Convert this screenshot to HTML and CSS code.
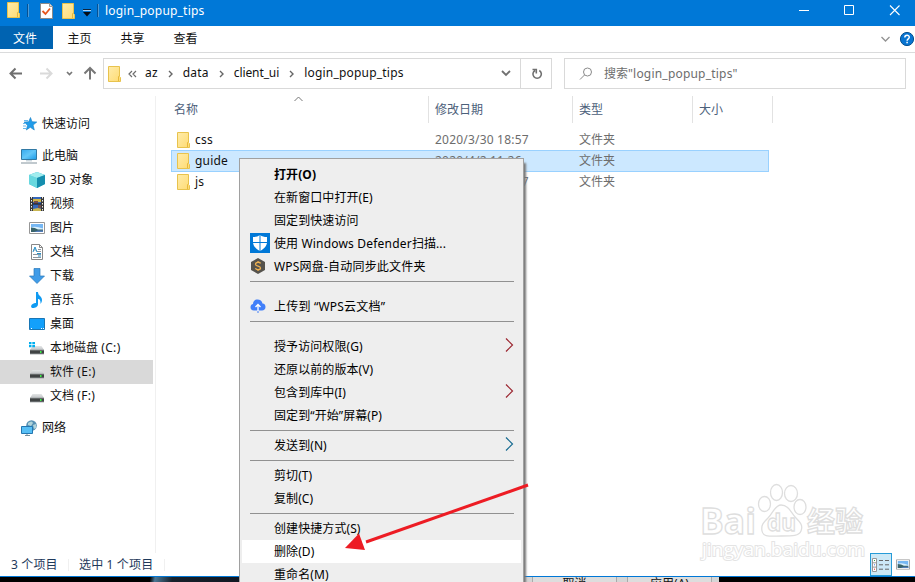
FILE: index.html
```html
<!DOCTYPE html>
<html lang="zh-CN">
<head>
<meta charset="utf-8">
<title>login_popup_tips</title>
<link rel="stylesheet" href="styles.css">
</head>
<body>
<svg class="defs" width="0" height="0">
  <defs>
    <linearGradient id="fold" x1="0" y1="0" x2="1" y2="1"><stop offset="0" stop-color="#ffecab"/><stop offset="1" stop-color="#fedb72"/></linearGradient>
    <linearGradient id="scr" x1="0" y1="0" x2="1" y2="1"><stop offset="0" stop-color="#35a9ee"/><stop offset=".5" stop-color="#64c7f8"/><stop offset="1" stop-color="#199ae8"/></linearGradient>
    <linearGradient id="drv" x1="0" y1="0" x2="0" y2="1"><stop offset="0" stop-color="#e4e6e7"/><stop offset="1" stop-color="#bfc2c4"/></linearGradient>
  </defs>
  <symbol id="folder" viewBox="0 0 13 16"><path d="M.5.5h11v10l1 1v4H.5z" fill="url(#fold)" stroke="#e8c34d"/><path d="M10.500 15v-4.500l1-1" fill="none" stroke="#e8b93a"/></symbol>
  <symbol id="drive" viewBox="0 0 16 16"><path d="M3.500 6h9L15 10H1z" fill="url(#drv)"/><path d="M1 10h14v4H1z" fill="#404344"/><path d="M1 10h14M1 14h14" stroke="#9da1a3" stroke-width=".8"/><path d="M11 11h1.500v2H11z" fill="#39ef45"/></symbol>
  <symbol id="photo" viewBox="0 0 16 12"><path d="M.5.5h15v11H.5z" fill="#fff" stroke="#969696"/><path d="M2 2h12v8H2z" fill="#76b7f3"/><path d="M2 5.500q4-2 12 1V8H2z" fill="#d9f0fd"/><path d="M2 5.500q4 0 7 2h5V10H2z" fill="#38636a"/><path d="M5 10l4-1.500h5V10z" fill="#547ebc"/></symbol>
</svg>
<div class="window">
  <header class="titlebar">
    <svg class="folder" width="13" height="16"><use href="#folder"/></svg>
    <i class="bar"></i>
    <svg class="check" width="13" height="16" viewBox="0 0 13 16"><path d="M.5.500h9l3 3v12H.5z" fill="#fff" stroke="#8a8a8a"/><path d="M9.500.5v3h3" fill="#ddd" stroke="#999"/><path d="M2.500 8l3 3L10 5.500" fill="none" stroke="#e8561c" stroke-width="1.800"/></svg>
    <svg class="folder second" width="13" height="16"><use href="#folder"/></svg>
    <svg class="more" width="8" height="8" viewBox="0 0 8 8"><path d="M0 .500h8" stroke="#10253c"/><path d="M0 1.500h8" stroke="#d4eaff" stroke-width=".8"/><path d="M0 3h8L4 7.500z" fill="#050c15"/></svg>
    <i class="bar last"></i>
    <span class="latin caption">login_popup_tips</span>
    <svg class="controls" width="112" height="22" viewBox="0 0 112 22" fill="none" stroke="#fff"><path d="M6 10.500h10M51.500 5.500h9v9h-9z"/><path d="M97 5.500l9.500 9.500M106.500 5.500L97 15" stroke-width="1.100"/></svg>
  </header>
  <nav class="tabs">
    <span class="tab active">文件</span><span class="tab">主页</span><span class="tab">共享</span><span class="tab">查看</span>
    <svg class="help" width="36" height="16" viewBox="0 0 36 16"><path d="M2.500 6l4 4 4-4" fill="none" stroke="#929292" stroke-width="1.300"/><circle cx="28" cy="8" r="6.600" fill="#0874d1" stroke="#075190"/><path d="M25.800 6.500c0-3 4.500-3 4.500-.2 0 1.600-2.200 1.500-2.200 3.400M28.100 10.800v1.500" fill="none" stroke="#fff" stroke-width="1.500"/></svg>
  </nav>
  <div class="navrow">
    <svg class="arrows" width="103" height="31" viewBox="0 0 103 31" fill="none" stroke-width="2"><path d="M22 15.500H11M15.500 10.500l-5 5 5 5" stroke="#6f6f6f"/><path d="M40 15.500h11M46.500 10.500l5 5-5 5" stroke="#dadada"/><path d="M67 14l2.500 2.500L72 14" stroke="#777" stroke-width="1.700"/><path d="M90 21.500V11M84.500 15.500l5.500-5.500 5.500 5.500" stroke="#777"/></svg>
    <div class="address">
      <svg class="folder" width="13" height="16"><use href="#folder"/></svg>
      <svg class="dbl" width="9" height="8" viewBox="0 0 9 8" fill="none" stroke="#6c6c6c" stroke-width="1.200"><path d="M4 1L1 4l3 3M8 1L5 4l3 3"/></svg>
      <span class="latin">az</span><svg class="chev" width="5" height="8"><path d="M1 1l3 3-3 3"/></svg>
      <span class="latin">data</span><svg class="chev" width="5" height="8"><path d="M1 1l3 3-3 3"/></svg>
      <span class="latin tight">client_ui</span><svg class="chev" width="5" height="8"><path d="M1 1l3 3-3 3"/></svg>
      <span class="latin">login_popup_tips</span>
      <svg class="drop" width="10" height="7" viewBox="0 0 10 7"><path d="M1 1l4 4 4-4" fill="none" stroke="#707070" stroke-width="1.800"/></svg>
      <svg class="refresh" width="31" height="29" viewBox="0 0 31 29" fill="none"><path d="M.5 0v29" stroke="#d9d9d9"/><path d="M19.300 11.500a4.200 4.200 0 1 1-4.300 0M12.500 10.500h3.800v4" stroke="#707070" stroke-width="1.600"/></svg>
    </div>
    <div class="search">
      <svg width="14" height="14" viewBox="0 0 14 14" fill="none" stroke="#8a8a8a"><circle cx="8.500" cy="5" r="4"/><path d="M5.500 8L1 12.500"/></svg>
      <span>搜索<span class="latin">"login_popup_tips"</span></span>
    </div>
  </div>
  <div class="body">
    <aside class="side">
      <div class="node top"><svg width="16" height="16" viewBox="0 0 16 16"><path d="M9.500 1.500l1.500 4.200 4.800.3-3.700 3.100 1.200 4.900-4-2.700-4 2.700 1.200-4.700L3 6l4.700-.3z" fill="#219ce9" stroke="#187fc5" stroke-width=".6"/><path d="M3 4.500h4M2 7.500h3M2 10h3M2 12.500h3" stroke="#69b9ee"/></svg>快速访问</div>
      <div class="node top gap"><svg width="16" height="16" viewBox="0 0 16 16"><path d="M.5 1.500h15v10H.5z" fill="url(#scr)" stroke="#3279a4"/><path d="M5 12h6v1.500H5z" fill="#ccd8df"/><path d="M0 15h16" stroke="#82939d"/></svg>此电脑</div>
      <div class="node"><svg width="16" height="16" viewBox="0 0 16 16"><path d="M0 3l8-3 8 3v9l-8 4-8-4z" fill="#33b5d2"/><path d="M0 3l8 3v10l-8-4z" fill="#68d8df"/><path d="M0 3l8-3 8 3-8 3z" fill="#a1edee"/><path d="M8 6l8-3v9l-8 4z" fill="#158eae"/></svg><span class="latin">3D</span>&nbsp;对象</div>
      <div class="node"><svg width="16" height="16" viewBox="0 0 16 16"><path d="M1 1h14v14H1z" fill="#383838"/><path d="M4 1h8v14H4z" fill="#3467bb"/><path d="M4 3h8v3H4z" fill="#d0b64a"/><path d="M5 5h4v3H5zM9 9h3v3H9z" fill="#724d4e"/><path d="M4 8h8" stroke="#141414"/><path d="M2.500 1v14M13.500 1v14" stroke="#eee" stroke-dasharray="1.500 1.500"/><path d="M4 13l5-1 3 1v2H4z" fill="#c9b651"/></svg>视频</div>
      <div class="node"><svg width="16" height="12"><use href="#photo"/></svg>图片</div>
      <div class="node"><svg width="16" height="16" viewBox="0 0 16 16"><path d="M2.500.5h8l3 3v12h-11z" fill="#fff" stroke="#888"/><path d="M10.500.5v3h3" fill="none" stroke="#888"/><path d="M4 6h3M9 5.500h3M8 7.500h4M4 10.500h8M4 13.500h8" stroke="#8b969e"/><path d="M4 8l2-5 2 5M8 9.500h4M9 12h3" fill="none" stroke="#2492cd"/></svg>文档</div>
      <div class="node"><svg width="16" height="16" viewBox="0 0 16 16"><path d="M5 .5h6V8h4.500L8 15.500.5 8H5z" fill="#409ce8" stroke="#2878ba" stroke-width=".7"/></svg>下载</div>
      <div class="node"><svg width="16" height="16" viewBox="0 0 16 16"><path d="M7 0h2c0 4 4 4 4 8 0 2-1 3-1.500 4 .3-4-1-5-2.500-5v5c0 3-3 4-5 4s-2.500-2-1-3.500S6 11 7 11z" fill="#109bf2"/></svg>音乐</div>
      <div class="node"><svg width="16" height="12" viewBox="0 0 16 12"><path d="M.5.5h15v11H.5z" fill="#13a0fb" stroke="#1976b5"/><path d="M2 10.500h1M12 10.500h1M14 10.500h1" stroke="#fff"/></svg>桌面</div>
      <div class="node"><svg width="16" height="16" viewBox="0 0 16 16"><use href="#drive" width="16" height="16"/><path d="M0 2h2.500v2.200H0zM3.300 2H6v2.200H3.300zM0 5h2.500v2.200H0zM3.300 5H6v2.200H3.300z" fill="#00aeef"/></svg>本地磁盘&nbsp;<span class="vol">(C:)</span></div>
      <div class="node selected"><svg width="16" height="16"><use href="#drive"/></svg>软件&nbsp;<span class="vol">(E:)</span></div>
      <div class="node"><svg width="16" height="16"><use href="#drive"/></svg>文档&nbsp;<span class="vol">(F:)</span></div>
      <div class="node top gap"><svg width="16" height="16" viewBox="0 0 16 16"><circle cx="10.500" cy="5.500" r="5.300" fill="#5791b4"/><path d="M7 3q4-3 5 0l-2 3-3-1zM12 5l3-1v4l-2 1z" fill="#b1d4da"/><path d="M.5 6.500h11v7H.5z" fill="#57bff5" stroke="#2477b0"/><path d="M4 15.500h5M6 14v1" stroke="#75909e"/></svg>网络</div>
    </aside>
    <main class="files">
      <div class="row head"><span>名称<svg class="sort" width="9" height="6" viewBox="0 0 9 6"><path d="M.5 5l4-4 4 4" fill="none" stroke="#777"/></svg></span><span>修改日期</span><span>类型</span><span>大小</span></div>
      <div class="row"><span><svg width="13" height="16"><use href="#folder"/></svg><b class="latin">css</b></span><span class="latin">2020/3/30 18:57</span><span>文件夹</span><span></span></div>
      <div class="row selected"><span><svg width="13" height="16"><use href="#folder"/></svg><b class="latin">guide</b></span><span class="latin">2020/4/2 11:26</span><span>文件夹</span><span></span></div>
      <div class="row"><span><svg width="13" height="16"><use href="#folder"/></svg><b class="latin">js</b></span><span class="latin">2020/3/30 18:57</span><span>文件夹</span><span></span></div>
    </main>
  </div>
  <footer class="status">
    <span class="count">3 个项目</span><span class="chosen">选中 1 个项目</span>
    <div class="views">
      <span class="view on"><svg width="18" height="14" viewBox="0 0 18 14" fill="#fff" stroke="#969696"><path d="M.5.5h4v13h-4zM.5 4.800h4M.5 9.100h4"/><path d="M7 2.500h4M13 2.500h4M7 6.800h4M13 6.800h4M7 11.200h4M13 11.200h4" stroke="#666"/><path d="M2 2.500h1" stroke="#38a14a"/><path d="M2 6.800h1" stroke="#3779e3"/><path d="M2 11.200h1" stroke="#e12323"/></svg></span>
      <svg class="thumb" width="14" height="11" viewBox="0 0 16 12"><use href="#photo" width="16" height="12"/></svg>
    </div>
  </footer>
</div>
<div class="desktop"><div class="space"></div><div class="dialog"><span>取消</span><span>应用(A)</span></div></div>

<svg class="watermark" width="170" height="84" viewBox="0 0 170 84">
  <g class="outline">
    <ellipse cx="67.500" cy="24" rx="6" ry="7.500"/><ellipse cx="79.500" cy="12.500" rx="6" ry="8"/><ellipse cx="94" cy="13.500" rx="6.500" ry="8"/><ellipse cx="103" cy="27" rx="6" ry="7.500"/>
    <path d="M84 25c8 0 10 8 15 13s7 8 5 13-8 5-20 5-18 1-19-5 1-8 6-13 7-13 13-13z"/>
    <text class="bai" x="3" y="54" textLength="56" lengthAdjust="spacingAndGlyphs">Bai</text>
    <text class="du" x="70" y="51" textLength="29" lengthAdjust="spacingAndGlyphs">du</text>
    <text class="exp" x="110" y="52" textLength="56">经验</text>
    <text class="url" x="5" y="76" textLength="163" lengthAdjust="spacingAndGlyphs">jingyan.baidu.com</text>
  </g>
</svg>

<div class="menu">
  <div class="item bold">打开(O)</div>
  <div class="item">在新窗口中打开(E)</div>
  <div class="item">固定到快速访问</div>
  <div class="item"><svg class="ico" width="20" height="20" viewBox="0 0 20 20"><path d="M0 0h20v20H0z" fill="#0078d7"/><path d="M10 2c2 1.500 4 2 7 2v5c0 4-3 7-7 9-4-2-7-5-7-9V4c3 0 5-.5 7-2z" fill="#fff"/><path d="M10 1v18M2 9.500h16" stroke="#0078d7"/></svg>使用&nbsp;<span class="latin">Windows Defender</span>扫描...</div>
  <div class="item wide"><svg class="ico" width="16" height="16" viewBox="0 0 16 16"><path d="M8 0l7 4v8l-7 4-7-4V4z" fill="#56534d"/><path d="M10.500 5.500C10 3.500 5.500 4 5.500 6.200c0 2.400 5 1.300 5 3.700 0 2.100-4.500 2.300-5 .3M8 3v1.500M8 11.500V13" fill="none" stroke="#efb151" stroke-width="1.300"/></svg>WPS网盘-自动同步此文件夹</div>
  <hr>
  <div class="item spaced wide"><svg class="ico" width="16" height="16" viewBox="0 0 16 16"><path d="M4 12.500C1.500 12.500.5 11 .5 9S2 6 3 6c0-3 2-4.500 4.500-4.500S12 3 12.500 5.500c2 .2 3 1.500 3 3.500s-1.500 3.500-3.500 3.500z" fill="#417ff9"/><path d="M8 13V7M5.500 9L8 6.500 10.500 9" fill="none" stroke="#fff" stroke-width="1.300"/><path d="M8 13V15" stroke="#417ff9"/></svg>上传到 “WPS云文档”</div>
  <hr>
  <div class="item spaced">授予访问权限(G)<svg class="sub" width="9" height="14" viewBox="0 0 9 14"><path d="M1 .5L7.500 7 1 13.500" stroke="#9c2630"/></svg></div>
  <div class="item">还原以前的版本(V)</div>
  <div class="item">包含到库中(I)<svg class="sub" width="9" height="14" viewBox="0 0 9 14"><path d="M1 .5L7.500 7 1 13.500" stroke="#9c2630"/></svg></div>
  <div class="item">固定到“开始”屏幕(P)</div>
  <hr>
  <div class="item">发送到(N)<svg class="sub" width="9" height="14" viewBox="0 0 9 14"><path d="M1 .5L7.500 7 1 13.500" stroke="#176b91"/></svg></div>
  <hr>
  <div class="item">剪切(T)</div>
  <div class="item">复制(C)</div>
  <hr>
  <div class="item">创建快捷方式(S)</div>
  <div class="item hot">删除(D)</div>
  <div class="item">重命名(M)</div>
</div>
<svg class="pointer" width="190" height="74" viewBox="0 0 190 74"><path d="M187 5L25 62" stroke="#ed1c24" stroke-width="3"/><path d="M4 68l14-14.500 6 16.500z" fill="#ed1c24"/></svg>
</body>
</html>
```
FILE: styles.css
```css
* { box-sizing: border-box; }
body {
  position: relative;
  width: 915px;
  height: 582px;
  margin: 0;
  overflow: hidden;
  background: #fff;
  color: #111;
  font: 12px/20px "Noto Sans", "Noto Sans CJK SC", sans-serif;
  white-space: nowrap;
}
svg { display: block; flex: none; }
.defs { position: absolute; }
.latin { letter-spacing: .2px; }
.latin.tight { letter-spacing: -.1px; }
.window { display: flex; flex-direction: column; height: 577px; border-bottom: 1px solid #0078d7; }

.titlebar { display: flex; height: 26px; background: #0078d7; color: #fff; padding: 2px 0 0 7px; }
.bar { width: 2px; height: 13px; margin: 2px 11px 0 7px; background: #4c9bd9; border-left: 1px solid #075091; }
.check { margin-top: 1px; }
.second { margin: 1px 8px 0 9px; }
.more { margin-top: 7px; }
.bar.last { margin: 2px 6px 0; }
.caption { margin-top: -1px; }
.controls { margin: -2px 10px 0 auto; }

.tabs { display: flex; align-items: flex-start; height: 27px; border-bottom: 1px solid #dadbdc; line-height: 24px; }
.tab { width: 53px; height: 23px; text-align: center; line-height: 25px; }
.tab.active { background: #0063b1; color: #fff; padding-right: 3px; }
.help { margin: 5px 0 0 auto; }

.navrow { display: flex; height: 43px; padding: 5px 9px 7px 0; }
.address { display: flex; align-items: center; width: 449px; border: 1px solid #d9d9d9; padding-left: 4px; }
.address .latin { margin-top: -2px; }
.dbl { margin: 0 8px 0 7px; }
.chev { margin: 0 10px; fill: none; stroke: #666; stroke-width: 1.4; }
.drop { margin: 0 9px 0 auto; }
.search { display: flex; align-items: center; gap: 11px; flex: 1; margin-left: 12px; padding-left: 14px; border: 1px solid #d9d9d9; color: #6d6d6d; }

.body { display: flex; height: 457px; }
.side { width: 156px; padding-top: 16px; border-right: 1px solid #f0f0f0; }
.node { display: flex; align-items: center; height: 24px; width: 153px; padding-left: 29px; }
.node svg { margin-right: 5px; }
.node.top { padding-left: 21px; }
.gap { margin-top: 8px; }
.vol { letter-spacing: .4px; }
.node.selected { background: #d9d9d9; }

.files { flex: 1; padding-left: 15px; }
.row { display: grid; grid-template-columns: 258px 144px 120px 76px; align-items: center; width: 598px; height: 21px; color: #6d6d6d; }
.row > span { padding-left: 6px; }
.row > span:first-child { display: flex; align-items: center; gap: 5px; padding-left: 6px; }
.row b { color: #111; font-weight: normal; }
.row.selected { height: 22px; margin-bottom: -1px; background: #cce8ff; box-shadow: inset 0 0 0 1px #99d1ff; }
.head { grid-template-columns: 258px 144px 120px 80px; width: 602px; height: 27px; margin-bottom: 6px; color: #4c607a; }
.row.head > span { position: relative; height: 27px; line-height: 27px; border-right: 1px solid #e2e2e2; }
.row.head > span:first-child { padding-left: 3px; }
.sort { position: absolute; left: 123px; top: 0; }

.status { display: flex; align-items: center; height: 23px; margin-top: auto; color: #1e395b; letter-spacing: .15px; }
.count { width: 69px; padding-left: 11px; border-right: 1px solid #f0f0f0; line-height: 12px; }
.chosen { width: 96px; padding-left: 10px; border-right: 1px solid #f0f0f0; line-height: 12px; }
.views { display: flex; align-items: center; margin: 0 5px 0 auto; gap: 4px; }
.view { display: grid; place-items: center; width: 22px; height: 23px; background: #cce8f6; border: 1px solid #269bd7; }

.desktop { display: flex; height: 5px; overflow: hidden; background: #000; }
.space { width: 524px; background: linear-gradient(100deg, #000 0 148px, #4b7795 153px, #17212b 170px, #111722 240px); }
.dialog { display: flex; gap: 10px; width: 195px; padding-left: 8px; background: #d5d5d5; }
.dialog span { width: 85px; height: 14px; border: solid #aaa; border-width: 0 1px; background: #ddd; text-align: center; line-height: 14px; }

.watermark { position: absolute; left: 697px; top: 480px; }
.outline { fill: #fff; stroke: #dedede; stroke-width: 1.3; font-family: "Open Sans", "Noto Sans CJK SC", sans-serif; font-weight: 700; }
.bai { font-size: 36px; }
.du { font-size: 24px; }
.exp { font-size: 28px; }
.url { font-size: 19px; font-weight: 400; stroke: #e4e4e4; stroke-width: 2; paint-order: stroke; }

.menu { position: absolute; left: 239px; top: 158px; width: 285px; height: 440px; padding: 4px 2px; background: #eee; border: 1px solid #a0a0a0; box-shadow: 3px 4px 2px -1px #777; color: #000; }
.item { position: relative; height: 23px; padding-left: 32px; line-height: 23px; white-space: pre; letter-spacing: .08px; }
.wide { letter-spacing: .2px; }
.menu hr { height: 1px; margin: 3px 7px 3px 8px; border: 0; background: #919191; }
.menu .spaced { margin-top: 13px; }
.bold { font-weight: 700; }
.hot { background: #fff; }
.ico { position: absolute; left: 8px; top: 1px; }
.ico[width="16"] { top: 3px; }
.sub { position: absolute; right: 7px; top: 3px; fill: none; stroke-width: 1.2; }
.pointer { position: absolute; left: 341px; top: 480px; }
```
